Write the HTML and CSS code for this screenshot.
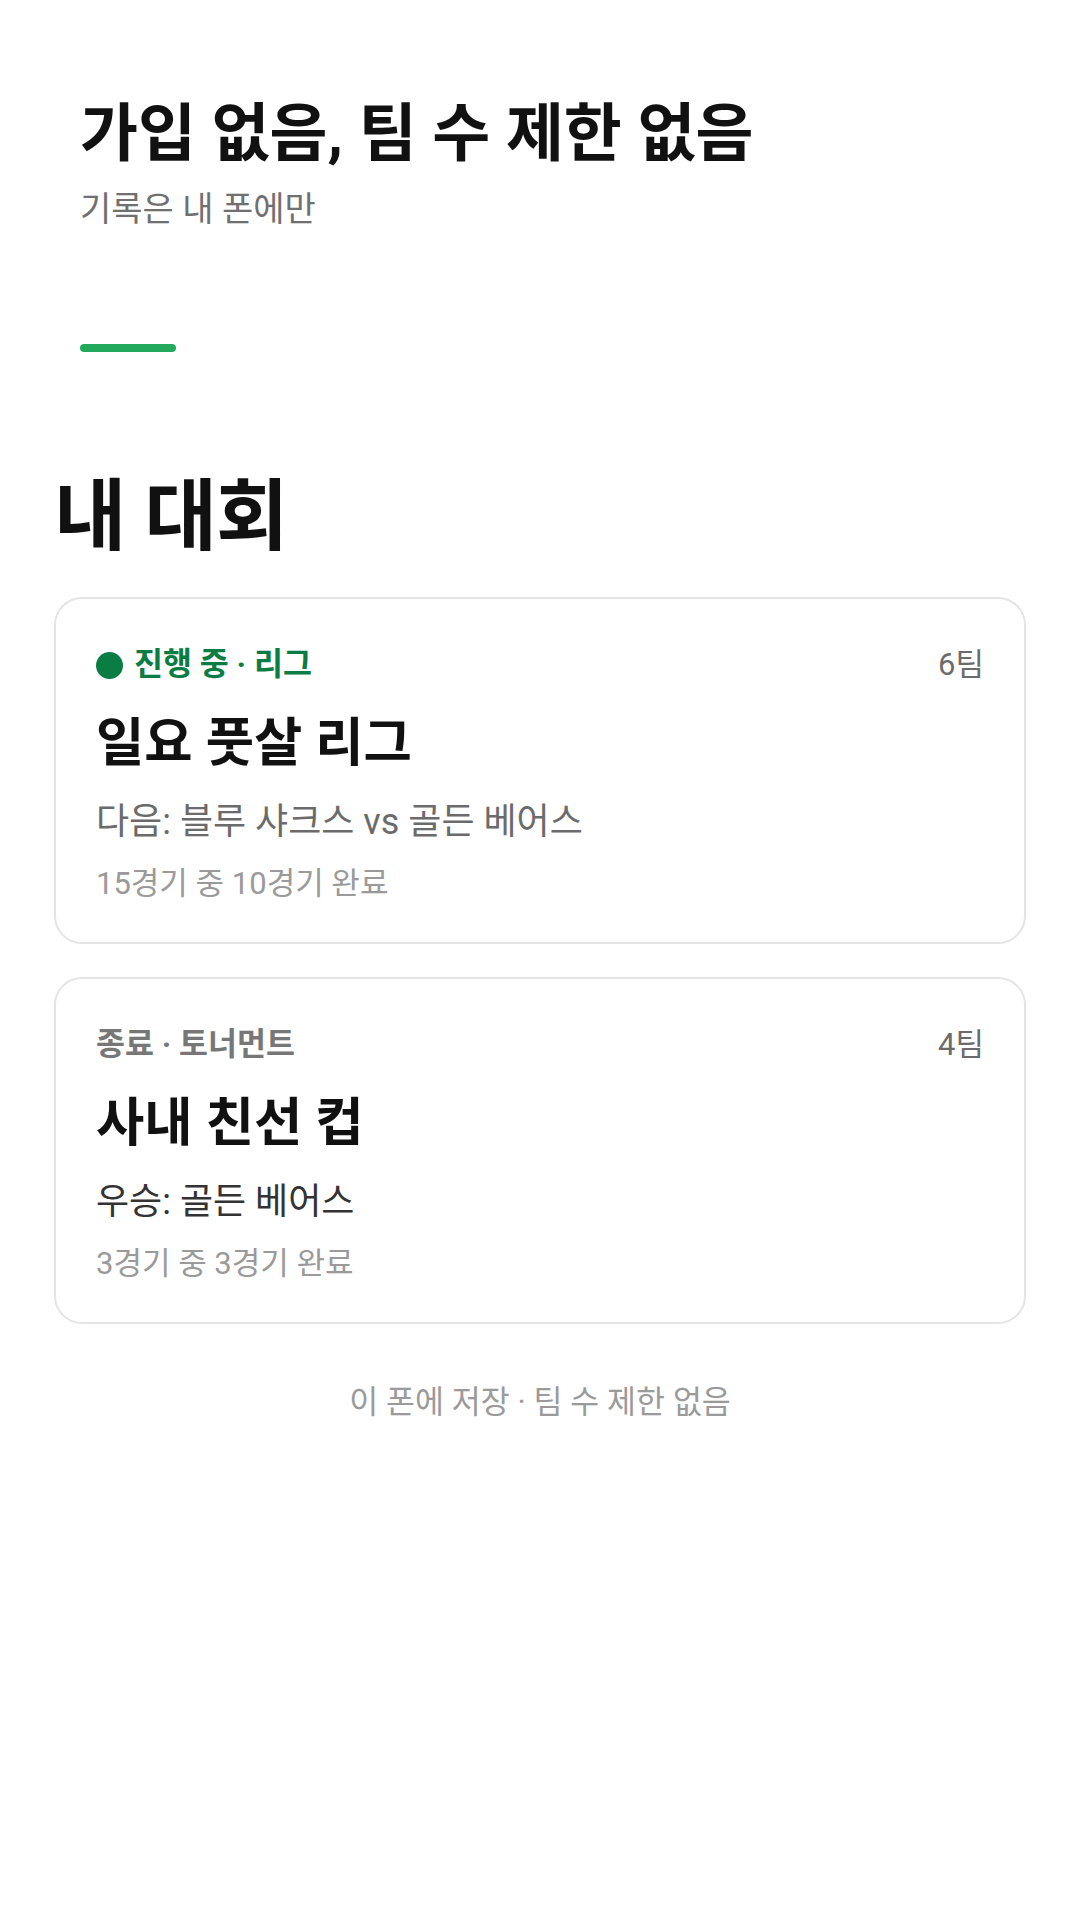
FILE: index.html
```html
<!DOCTYPE html>
<html lang="ko">
<head>
<meta charset="utf-8">
<title>내 대회</title>
<link rel="stylesheet" href="styles.css">
</head>
<body>
<main class="page">
  <header class="hero">
    <h1 class="hero-title">가입 없음, 팀 수 제한 없음</h1>
    <p class="hero-sub">기록은 내 폰에만</p>
    <div class="hero-accent"></div>
  </header>

  <h2 class="section-title">내 대회</h2>

  <section class="cards">
    <article class="card">
      <div class="card-meta">
        <span class="status status-live"><span class="status-dot"></span>진행 중 · 리그</span>
        <span class="team-count">6팀</span>
      </div>
      <h3 class="card-title">일요 풋살 리그</h3>
      <p class="card-line">다음: 블루 샤크스 vs 골든 베어스</p>
      <p class="card-progress">15경기 중 10경기 완료</p>
    </article>

    <article class="card">
      <div class="card-meta">
        <span class="status status-done">종료 · 토너먼트</span>
        <span class="team-count">4팀</span>
      </div>
      <h3 class="card-title">사내 친선 컵</h3>
      <p class="card-line card-line-strong">우승: 골든 베어스</p>
      <p class="card-progress">3경기 중 3경기 완료</p>
    </article>
  </section>

  <p class="footnote">이 폰에 저장 · 팀 수 제한 없음</p>
</main>
</body>
</html>
```

FILE: styles.css
```css
* {
  box-sizing: border-box;
}

html, body {
  margin: 0;
  padding: 0;
  background: #ffffff;
}

body {
  font-family: Roboto, "Noto Sans CJK KR", sans-serif;
  color: #111111;
}

.page {
  padding: 0 54px;
}

.hero {
  padding: 96px 26px 0;
}

.hero-title {
  margin: 0;
  font-size: 63px;
  line-height: 76px;
  font-weight: 700;
  color: #111111;
}

.hero-sub {
  margin: 15px 0 0;
  font-size: 34px;
  line-height: 44px;
  color: #707070;
}

.hero-accent {
  margin-top: 113px;
  width: 96px;
  height: 8px;
  border-radius: 4px;
  background: #22a95b;
}

.section-title {
  margin: 118px 0 0;
  font-size: 78.75px;
  line-height: 94px;
  font-weight: 700;
  letter-spacing: -0.01em;
  color: #111111;
}

.cards {
  margin-top: 33px;
  display: flex;
  flex-direction: column;
  gap: 33px;
}

.card {
  border: 2px solid #e4e4e4;
  border-radius: 28px;
  padding: 44px 40px 38px;
  background: #ffffff;
}

.card-meta {
  display: flex;
  justify-content: space-between;
  align-items: center;
  height: 44px;
}

.status {
  display: inline-flex;
  align-items: center;
  font-size: 31.5px;
  font-weight: 700;
  line-height: 44px;
}

.status-live {
  color: #0a7d45;
}

.status-done {
  color: #777777;
}

.status-dot {
  display: inline-block;
  width: 27px;
  height: 27px;
  border-radius: 50%;
  background: #0a7d45;
  margin-right: 11px;
}

.team-count {
  font-size: 31px;
  line-height: 44px;
  color: #6b6b6b;
}

.card-title {
  margin: 27px 0 0;
  font-size: 52.5px;
  line-height: 58px;
  font-weight: 700;
  color: #111111;
}

.card-line {
  margin: 27px 0 0;
  font-size: 36px;
  line-height: 46px;
  color: #6b6b6b;
}

.card-line-strong {
  color: #333333;
}

.card-progress {
  margin: 19px 0 0;
  font-size: 31px;
  line-height: 40px;
  color: #9a9a9a;
}

.footnote {
  margin: 58px 0 0;
  text-align: center;
  font-size: 31.5px;
  line-height: 42px;
  color: #9a9a9a;
}
```
